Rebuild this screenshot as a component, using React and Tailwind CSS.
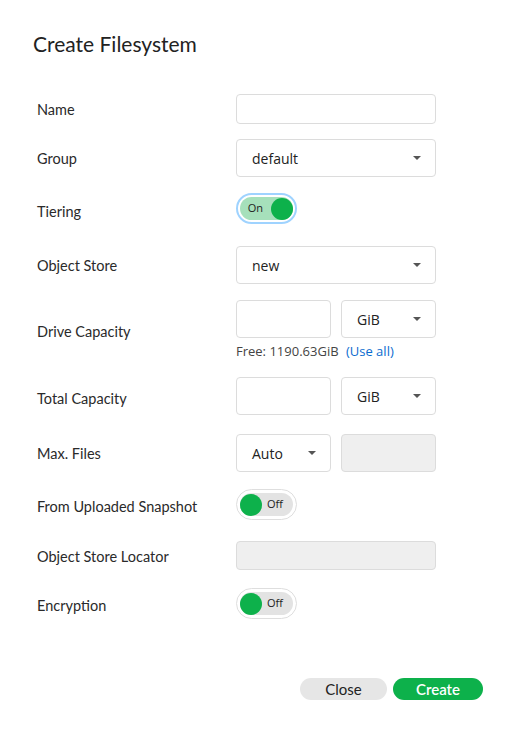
import React from "react";

const labelFont = { fontFamily: "Lato, 'Noto Sans', sans-serif" };
const valFont = { fontFamily: "'Open Sans', 'Noto Sans', sans-serif" };

function Caret() {
  return (
    <svg width="8" height="4" viewBox="0 0 8 4" className="shrink-0">
      <path d="M0 0 H8 L4 4 Z" fill="#555" />
    </svg>
  );
}

function Select({ value, className = "" }) {
  return (
    <div
      className={`flex items-center justify-between border border-[#dcdcdc] rounded-[4px] bg-white pl-[15px] pr-[14px] text-[14px] text-[#222] ${className}`}
      style={valFont}
    >
      <span>{value}</span>
      <Caret />
    </div>
  );
}

function Toggle({ on }) {
  return (
    <div
      className={`w-[61px] h-[31px] rounded-full bg-white flex items-center justify-center ${
        on ? "border-2 border-[#9fd3ff]" : "border border-[#dedede]"
      }`}
    >
      <div
        className={`w-[53px] h-[23px] rounded-full flex items-center ${
          on ? "bg-[#a6e0bb] flex-row-reverse" : "bg-[#e3e3e3]"
        }`}
      >
        <div className="w-[22px] h-[22px] rounded-full bg-[#0db14b]" />
        <span
          className={`text-[11px] text-[#222] ${on ? "mr-[8px] ml-[7px]" : "ml-[5px]"}`}
          style={valFont}
        >
          {on ? "On" : "Off"}
        </span>
      </div>
    </div>
  );
}

function Label({ children, className = "" }) {
  return (
    <div
      className={`w-[199px] flex items-center text-[14.5px] text-[#2a2a2a] ${className}`}
      style={labelFont}
    >
      {children}
    </div>
  );
}

export default function App() {
  return (
    <div className="w-[521px] h-[739px] bg-white relative">
      <div className="pl-[33px] pt-[31px]">
        <h1 className="text-[21px] text-[#222] leading-[26px]" style={labelFont}>
          Create Filesystem
        </h1>
      </div>
      <div className="pl-[37px]">
        <div className="flex mt-[37px] h-[30px]">
          <Label className="pt-[2px]">Name</Label>
          <div className="w-[200px] h-[30px] border border-[#dcdcdc] rounded-[4px]" />
        </div>
        <div className="flex mt-[15px] h-[38px]">
          <Label className="pt-[1px]">Group</Label>
          <Select value="default" className="w-[200px] h-[38px]" />
        </div>
        <div className="flex mt-[16px] h-[31px]">
          <Label className="pt-[7px]">Tiering</Label>
          <Toggle on />
        </div>
        <div className="flex mt-[22px] h-[38px]">
          <Label className="pt-[2px]">Object Store</Label>
          <Select value="new" className="w-[200px] h-[38px]" />
        </div>
        <div className="flex mt-[16px]">
          <Label className="pt-[4px]">Drive Capacity</Label>
          <div className="flex flex-col">
            <div className="flex gap-[10px]">
              <div className="w-[95px] h-[38px] border border-[#dcdcdc] rounded-[4px]" />
              <Select value="GiB" className="w-[95px] h-[38px]" />
            </div>
            <div className="mt-[4px] text-[13px] leading-[18px] text-[#444]" style={valFont}>
              Free: 1190.63GiB <span className="ml-[4px] text-[#0a6ccf]">(Use all)</span>
            </div>
          </div>
        </div>
        <div className="flex mt-[17px] h-[38px]">
          <Label className="pt-[6px]">Total Capacity</Label>
          <div className="flex gap-[10px]">
            <div className="w-[95px] h-[38px] border border-[#dcdcdc] rounded-[4px]" />
            <Select value="GiB" className="w-[95px] h-[38px]" />
          </div>
        </div>
        <div className="flex mt-[19px] h-[38px]">
          <Label className="pt-[1px]">Max. Files</Label>
          <div className="flex gap-[10px]">
            <Select value="Auto" className="w-[95px] h-[38px]" />
            <div className="w-[95px] h-[38px] border border-[#dcdcdc] rounded-[4px] bg-[#efefef]" />
          </div>
        </div>
        <div className="flex mt-[17px] h-[31px]">
          <Label className="pt-[5px]">From Uploaded Snapshot</Label>
          <Toggle />
        </div>
        <div className="flex mt-[21px] h-[29px]">
          <Label className="pt-[3px]">Object Store Locator</Label>
          <div className="w-[200px] h-[29px] border border-[#dcdcdc] rounded-[4px] bg-[#efefef]" />
        </div>
        <div className="flex mt-[18px] h-[31px]">
          <Label className="pt-[5px]">Encryption</Label>
          <Toggle />
        </div>
      </div>
      <div className="flex justify-end gap-[6px] pr-[38px] mt-[59px]">
        <button className="w-[87px] h-[22px] rounded-full bg-[#e6e6e6] text-[15px] text-[#222] leading-[22px]" style={labelFont}>
          Close
        </button>
        <button className="w-[90px] h-[22px] rounded-full bg-[#0db14b] text-[15px] text-white leading-[22px] font-semibold" style={labelFont}>
          Create
        </button>
      </div>
    </div>
  );
}
